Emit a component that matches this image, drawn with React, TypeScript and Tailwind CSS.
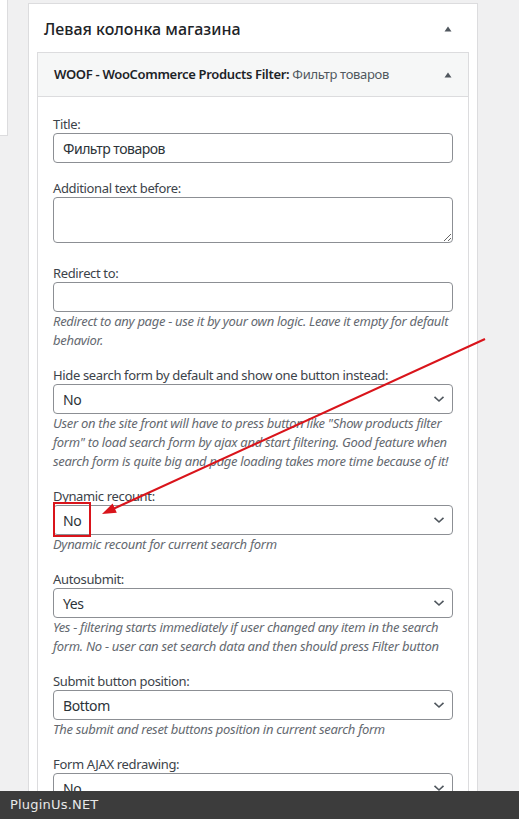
import React from "react";

const font = { fontFamily: '"Noto Sans", "Open Sans", Arial, sans-serif' };

function Chevron() {
  return (
    <svg width="12" height="8" viewBox="0 0 12 8" className="shrink-0">
      <path d="M1.5 1.8 L6 6 L10.5 1.8" fill="none" stroke="#50575e" strokeWidth="1.6" />
    </svg>
  );
}

function Label({ children }: { children: React.ReactNode }) {
  return <div className="text-[13px] leading-[18px] tracking-[-0.35px] text-[#3c434a]">{children}</div>;
}

function Desc({ children }: { children: React.ReactNode }) {
  return <div className="text-[13px] leading-[19px] italic tracking-[-0.3px] text-[#646970]">{children}</div>;
}

function Select({ value }: { value: string }) {
  return (
    <div className="h-[30px] w-full rounded-[4px] border border-[#8c8f94] bg-white flex items-center justify-between pl-[9px] pr-[7px] text-[14px] tracking-[-0.4px] text-[#2c3338]">
      <span>{value}</span>
      <Chevron />
    </div>
  );
}

function TextInput({ value }: { value?: string }) {
  return (
    <div className="h-[30px] w-full rounded-[4px] border border-[#8c8f94] bg-white flex items-center pl-[9px] text-[14px] tracking-[-0.5px] text-[#2c3338]">
      {value}
    </div>
  );
}

function Triangle() {
  return (
    <svg width="8" height="6" viewBox="0 0 8 6" className="shrink-0">
      <path d="M0.5 5.5 L4 0.5 L7.5 5.5 Z" fill="#50575e" />
    </svg>
  );
}

export default function App() {
  return (
    <div className="relative w-[519px] h-[819px] overflow-hidden bg-[#f0f0f1]" style={font}>
      <div className="flex items-start">
        <div className="w-[8px] h-[136px] bg-white border-r border-b border-[#dcdcde] shrink-0" />
        <div className="ml-[20px] mt-[3px] w-[450px] shrink-0 bg-white border border-[#dcdcde] min-h-[900px]">
          <div className="h-[48px] flex items-center justify-between pl-[15px] pr-[25px] pt-[2px]">
            <h2 className="text-[16px] font-medium tracking-[0px] text-[#1d2327] leading-none">Левая колонка магазина</h2>
            <Triangle />
          </div>
          <div className="px-[8px]">
            <div className="border border-[#dcdcde] bg-white">
              <div className="h-[44px] bg-[#f6f7f7] border-b border-[#dcdcde] flex items-center justify-between pl-[16px] pr-[16px]">
                <div className="text-[13px] tracking-[-0.32px] text-[#1d2327]">
                  <span className="font-semibold">WOOF - WooCommerce Products Filter:</span>{" "}
                  <span className="text-[#50575e]">Фильтр товаров</span>
                </div>
                <Triangle />
              </div>
              <div className="px-[15px] pt-[18px] pb-[20px]">
                <Label>Title:</Label>
                <TextInput value="Фильтр товаров" />

                <div className="mt-[16px]">
                  <Label>Additional text before:</Label>
                  <textarea
                    className="block w-full h-[46px] rounded-[4px] border border-[#8c8f94] bg-white resize-y"
                    readOnly
                  />
                </div>

                <div className="mt-[21px]">
                  <Label>Redirect to:</Label>
                  <TextInput />
                  <Desc>Redirect to any page - use it by your own logic. Leave it empty for default behavior.</Desc>
                </div>

                <div className="mt-[16px]">
                  <Label>Hide search form by default and show one button instead:</Label>
                  <Select value="No" />
                  <Desc>
                    User on the site front will have to press button like "Show products filter form" to load search form by ajax and start filtering. Good feature when search form is quite big and page loading takes more time because of it!
                  </Desc>
                </div>

                <div className="mt-[16px]">
                  <Label>Dynamic recount:</Label>
                  <Select value="No" />
                  <Desc>Dynamic recount for current search form</Desc>
                </div>

                <div className="mt-[16px]">
                  <Label>Autosubmit:</Label>
                  <Select value="Yes" />
                  <Desc>
                    Yes - filtering starts immediately if user changed any item in the search form. No - user can set search data and then should press Filter button
                  </Desc>
                </div>

                <div className="mt-[16px]">
                  <Label>Submit button position:</Label>
                  <Select value="Bottom" />
                  <Desc>The submit and reset buttons position in current search form</Desc>
                </div>

                <div className="mt-[16px]">
                  <Label>Form AJAX redrawing:</Label>
                  <Select value="No" />
                </div>
              </div>
            </div>
          </div>
        </div>
      </div>

      <div className="absolute left-[53px] top-[502px] w-[38px] h-[35px] border-2 border-[#d9141b]" />

      <svg className="absolute inset-0 pointer-events-none" width="519" height="819" viewBox="0 0 519 819">
        <line x1="485" y1="339" x2="113" y2="509" stroke="#d9141b" strokeWidth="2" />
        <path d="M102 514 L116.8 512.7 L112.6 503.6 Z" fill="#d9141b" />
      </svg>

      <div className="absolute left-0 right-0 bottom-0 h-[28px] bg-[#3c3c3c] flex items-center pl-[10px]">
        <span className="text-[13px] text-[#e8e8e8] tracking-[0.2px]" style={{ fontFamily: '"DejaVu Sans", sans-serif' }}>
          PluginUs.NET
        </span>
      </div>
    </div>
  );
}
